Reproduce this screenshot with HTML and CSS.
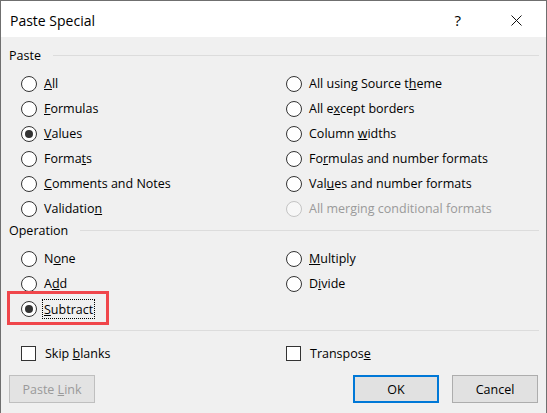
FILE: index.html
```html
<!DOCTYPE html>
<html>
<head>
<meta charset="utf-8">
<title>Paste Special</title>
<link rel="stylesheet" href="styles.css">
</head>
<body>
<div class="dialog">
  <div class="titlebar">
    <span class="title">Paste Special</span>
    <span class="help">?</span>
    <svg class="close" width="11" height="11" viewBox="0 0 11 11"><path d="M0.5 0.5 L10.5 10.5 M10.5 0.5 L0.5 10.5" stroke="#111" stroke-width="1" fill="none"/></svg>
  </div>
  <div class="content">
    <div class="group-head"><span>Paste</span><i class="rule"></i></div>
    <div class="options">
      <div class="opt"><span class="radio"></span><span class="lbl"><u>A</u>ll</span></div>
      <div class="opt"><span class="radio"></span><span class="lbl">All using Source t<u>h</u>eme</span></div>
      <div class="opt"><span class="radio"></span><span class="lbl"><u>F</u>ormulas</span></div>
      <div class="opt"><span class="radio"></span><span class="lbl">All e<u>x</u>cept borders</span></div>
      <div class="opt"><span class="radio on"></span><span class="lbl"><u>V</u>alues</span></div>
      <div class="opt"><span class="radio"></span><span class="lbl">Column <u>w</u>idths</span></div>
      <div class="opt"><span class="radio"></span><span class="lbl">Forma<u>t</u>s</span></div>
      <div class="opt"><span class="radio"></span><span class="lbl">Fo<u>r</u>mulas and number formats</span></div>
      <div class="opt"><span class="radio"></span><span class="lbl"><u>C</u>omments and Notes</span></div>
      <div class="opt"><span class="radio"></span><span class="lbl">Val<u>u</u>es and number formats</span></div>
      <div class="opt"><span class="radio"></span><span class="lbl">Validatio<u>n</u></span></div>
      <div class="opt disabled"><span class="radio"></span><span class="lbl">All mer<u>g</u>ing conditional formats</span></div>
    </div>
    <div class="group-head op"><span>Operation</span><i class="rule"></i></div>
    <div class="options">
      <div class="opt"><span class="radio"></span><span class="lbl">N<u>o</u>ne</span></div>
      <div class="opt"><span class="radio"></span><span class="lbl"><u>M</u>ultiply</span></div>
      <div class="opt"><span class="radio"></span><span class="lbl">A<u>d</u>d</span></div>
      <div class="opt"><span class="radio"></span><span class="lbl">D<u>i</u>vide</span></div>
      <div class="opt marked"><span class="radio on"></span><span class="lbl focus"><u>S</u>ubtract</span><span class="highlight"></span></div>
      <div class="opt"></div>
    </div>
    <div class="sep"></div>
    <div class="options checks">
      <div class="opt"><span class="check"></span><span class="lbl">Skip <u>b</u>lanks</span></div>
      <div class="opt"><span class="check"></span><span class="lbl">Transpos<u>e</u></span></div>
    </div>
    <div class="buttons">
      <button class="btn disabled">Paste <u>L</u>ink</button>
      <button class="btn default">OK</button>
      <button class="btn cancel">Cancel</button>
    </div>
  </div>
</div>
</body>
</html>
```

FILE: styles.css
```css
* { box-sizing: border-box; }
html, body { margin: 0; padding: 0; background: #f0f0f0; }
body {
  font-family: "Open Sans", "Noto Sans", sans-serif;
  font-size: 12.5px;
  color: #000;
}
.dialog {
  width: 547px;
  height: 413px;
  border: 1px solid #6f6f6f;
  border-bottom: none;
  background: #f0f0f0;
  display: flex;
  flex-direction: column;
}
.titlebar {
  height: 36px;
  background: #fff;
  display: flex;
  align-items: center;
  padding: 2px 0 0 9px;
}
.title {
  flex: 1;
  font-size: 14px;
  line-height: 19px;
}
.help {
  font-size: 15px;
  line-height: 19px;
  margin-right: 50px;
}
.close {
  margin-right: 24px;
}
.content {
  flex: 1;
  padding: 10px 7px 0 8px;
  display: flex;
  flex-direction: column;
}
.group-head {
  display: flex;
  align-items: center;
  line-height: 17px;
  height: 17px;
}
.group-head .rule {
  flex: 1;
  height: 1px;
  background: #dcdcdc;
  margin-left: 12px;
}
.group-head.op { margin-top: 1px; }
.options {
  display: grid;
  grid-template-columns: 265px 1fr;
  margin: 7px 0 0 12px;
}
.opt {
  height: 25px;
  display: flex;
  align-items: center;
  line-height: 17px;
  position: relative;
}
.radio {
  width: 16px;
  height: 16px;
  border: 1px solid #333;
  border-radius: 50%;
  background: #fff;
  display: flex;
  align-items: center;
  justify-content: center;
  flex: none;
}
.radio.on::after {
  content: "";
  width: 8px;
  height: 8px;
  border-radius: 50%;
  background: #333;
}
.lbl { margin-left: 7px; white-space: nowrap; }
.disabled .radio { border-color: #c4c4c4; background: #f7f7f7; }
.disabled .lbl { color: #9a9a9a; }
.focus {
  border: 1px dotted #000;
  padding: 1px 1px 0 1px;
  margin-left: 5px;
}
.highlight {
  position: absolute;
  left: -14px;
  top: -5px;
  width: 102px;
  height: 34px;
  border: 3px solid #f0464b;
}
.sep {
  height: 1px;
  background: #dcdcdc;
  margin: 9px 0 0 11px;
}
.checks { margin-top: 10px; }
.check {
  width: 15px;
  height: 15px;
  border: 1px solid #333;
  background: #fff;
  flex: none;
}
.checks .lbl { margin-left: 9px; }
.buttons {
  display: flex;
  margin-top: 9px;
  padding-right: 1px;
}
.btn {
  width: 86px;
  height: 28px;
  font-family: inherit;
  font-size: 12.5px;
  color: #000;
  background: #e1e1e1;
  border: 1px solid #adadad;
  padding: 0;
  margin: 0;
  line-height: 17px;
}
.btn.disabled {
  color: #9a9a9a;
  background: #e3e3e3;
  border-color: #bfbfbf;
}
.btn.default {
  margin-left: auto;
  border: 2px solid #0078d7;
}
.btn.cancel { margin-left: 13px; }
```
